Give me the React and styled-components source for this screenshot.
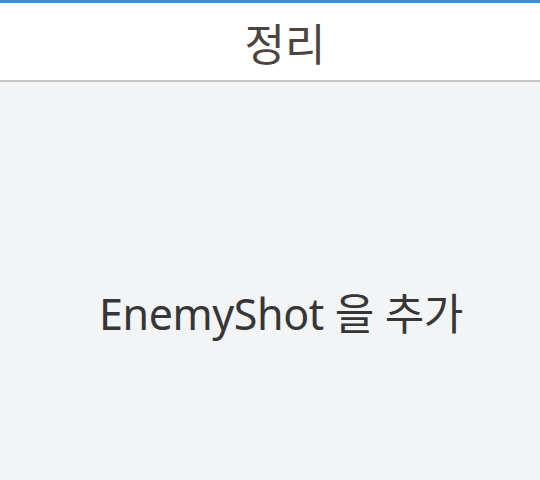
import React from "react";
import styled, { createGlobalStyle } from "styled-components";

const Global = createGlobalStyle`
    html, body {
        margin: 0;
        padding: 0;
        background: #f3f4f6;
    }
    body {
        font-family: "Noto Sans", "Noto Sans CJK KR", sans-serif;
    }
`;

const Page = styled.div`
    width: 540px;
    height: 480px;
    display: flex;
    flex-direction: column;
    border-top: 3px solid #3d8fe0;
    box-sizing: border-box;
    overflow: hidden;
`;

const Header = styled.header`
    height: 79px;
    background: #ffffff;
    border-bottom: 2px solid #c4c4c4;
    display: flex;
    align-items: center;
    justify-content: center;
    padding-left: 30px;
    box-sizing: border-box;
`;

const Title = styled.h1`
    margin: 0;
    font-family: "Noto Sans CJK KR", sans-serif;
    font-weight: 400;
    font-size: 44px;
    color: #4b4440;
`;

const Body = styled.main`
    flex: 1;
    display: flex;
    justify-content: center;
    padding-top: 198px;
    padding-left: 22px;
`;

const Message = styled.p`
    margin: 0;
    font-size: 43px;
    color: #363636;
    letter-spacing: -0.4px;
`;

const App = () => {
    return (
        <Page>
            <Global />
            <Header>
                <Title>정리</Title>
            </Header>
            <Body>
                <Message>EnemyShot 을 추가</Message>
            </Body>
        </Page>
    );
};

export default App;
